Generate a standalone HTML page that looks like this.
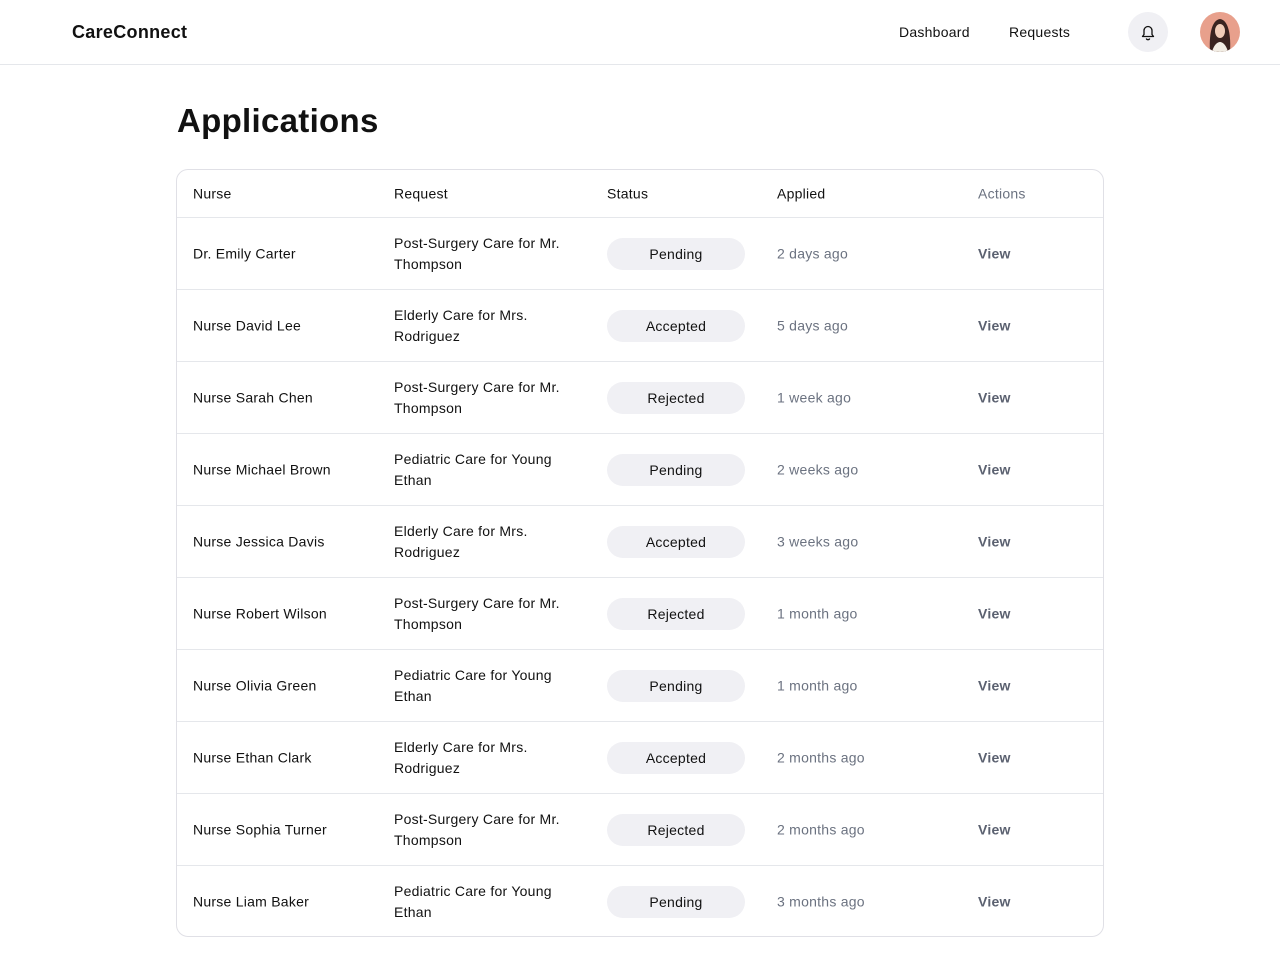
<!DOCTYPE html>
<html><head><style>
*{margin:0;padding:0;box-sizing:border-box}
body{width:1280px;height:969px;background:#fff;font-family:"Liberation Sans",Arial,sans-serif;color:#111;font-size:14px;letter-spacing:0.25px;position:relative;overflow:hidden}
.hdr{position:absolute;top:0;left:0;width:1280px;height:65px;border-bottom:1px solid #e5e7eb}
.logo{position:absolute;left:72px;top:22px;font-size:18px;font-weight:bold;color:#111;letter-spacing:0.3px}
.nav{position:absolute;top:24px;font-size:14px}
.bell{position:absolute;left:1128px;top:12px;width:40px;height:40px;border-radius:50%;background:#f0f0f4}
.av{position:absolute;left:1200px;top:12px;width:40px;height:40px;border-radius:50%;background:#e8a08c;overflow:hidden}
h1{position:absolute;left:177px;top:102px;font-size:33px;font-weight:bold;color:#111;letter-spacing:0.3px}
.tbl{position:absolute;left:176px;top:169px;width:928px;height:768px;border:1px solid #e0e0e6;border-radius:12px;overflow:hidden}
.row{position:relative;height:72px;border-top:1px solid #e5e7eb}
.th{height:47px;position:relative}
.c{position:absolute;top:50%;transform:translateY(-50%);line-height:21px}
.pill{position:absolute;left:430px;top:20px;width:138px;height:32px;border-radius:16px;background:#f0f0f4;text-align:center;line-height:32px}
.g{color:#6b7280}
.v{color:#5b6170;font-weight:bold}
</style></head><body>
<div class="hdr">
<div class="logo">CareConnect</div>
<div class="nav" style="left:899px">Dashboard</div>
<div class="nav" style="left:1009px">Requests</div>
<div class="bell"><svg width="40" height="40" viewBox="0 0 40 40"><path d="M14.5 24.5h11l-1.5-2v-4a4 4 0 0 0-8 0v4z M18.3 26.5a1.8 1.8 0 0 0 3.4 0" fill="none" stroke="#111" stroke-width="1.3" stroke-linejoin="round"/></svg></div>
<div class="av"><svg width="40" height="40" viewBox="0 0 40 40"><path d="M10 40C9 25 11 8 20 7c9 1 11 18 10 33z" fill="#3a2420"/><ellipse cx="20" cy="19" rx="5" ry="7" fill="#f1cdb8"/><path d="M12 40c2-8 6-10 8-10s6 2 8 10z" fill="#f2ede4"/></svg></div>
</div>
<h1>Applications</h1>
<div class="tbl">
<div class="th"><span class="c" style="left:16px">Nurse</span><span class="c" style="left:217px">Request</span><span class="c" style="left:430px">Status</span><span class="c" style="left:600px">Applied</span><span class="c g" style="left:801px">Actions</span></div>
<div class="row"><span class="c" style="left:16px">Dr. Emily Carter</span><span class="c" style="left:217px">Post-Surgery Care for Mr.<br>Thompson</span><div class="pill">Pending</div><span class="c g" style="left:600px">2 days ago</span><span class="c v" style="left:801px">View</span></div>
<div class="row"><span class="c" style="left:16px">Nurse David Lee</span><span class="c" style="left:217px">Elderly Care for Mrs.<br>Rodriguez</span><div class="pill">Accepted</div><span class="c g" style="left:600px">5 days ago</span><span class="c v" style="left:801px">View</span></div>
<div class="row"><span class="c" style="left:16px">Nurse Sarah Chen</span><span class="c" style="left:217px">Post-Surgery Care for Mr.<br>Thompson</span><div class="pill">Rejected</div><span class="c g" style="left:600px">1 week ago</span><span class="c v" style="left:801px">View</span></div>
<div class="row"><span class="c" style="left:16px">Nurse Michael Brown</span><span class="c" style="left:217px">Pediatric Care for Young<br>Ethan</span><div class="pill">Pending</div><span class="c g" style="left:600px">2 weeks ago</span><span class="c v" style="left:801px">View</span></div>
<div class="row"><span class="c" style="left:16px">Nurse Jessica Davis</span><span class="c" style="left:217px">Elderly Care for Mrs.<br>Rodriguez</span><div class="pill">Accepted</div><span class="c g" style="left:600px">3 weeks ago</span><span class="c v" style="left:801px">View</span></div>
<div class="row"><span class="c" style="left:16px">Nurse Robert Wilson</span><span class="c" style="left:217px">Post-Surgery Care for Mr.<br>Thompson</span><div class="pill">Rejected</div><span class="c g" style="left:600px">1 month ago</span><span class="c v" style="left:801px">View</span></div>
<div class="row"><span class="c" style="left:16px">Nurse Olivia Green</span><span class="c" style="left:217px">Pediatric Care for Young<br>Ethan</span><div class="pill">Pending</div><span class="c g" style="left:600px">1 month ago</span><span class="c v" style="left:801px">View</span></div>
<div class="row"><span class="c" style="left:16px">Nurse Ethan Clark</span><span class="c" style="left:217px">Elderly Care for Mrs.<br>Rodriguez</span><div class="pill">Accepted</div><span class="c g" style="left:600px">2 months ago</span><span class="c v" style="left:801px">View</span></div>
<div class="row"><span class="c" style="left:16px">Nurse Sophia Turner</span><span class="c" style="left:217px">Post-Surgery Care for Mr.<br>Thompson</span><div class="pill">Rejected</div><span class="c g" style="left:600px">2 months ago</span><span class="c v" style="left:801px">View</span></div>
<div class="row"><span class="c" style="left:16px">Nurse Liam Baker</span><span class="c" style="left:217px">Pediatric Care for Young<br>Ethan</span><div class="pill">Pending</div><span class="c g" style="left:600px">3 months ago</span><span class="c v" style="left:801px">View</span></div>
</div>
</body></html>
